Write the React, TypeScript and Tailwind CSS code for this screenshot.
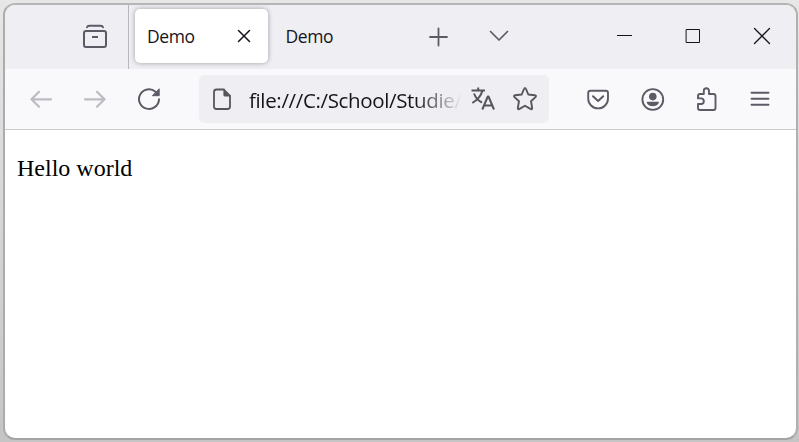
import type { ReactNode } from "react";

function Icon({ children, className = "" }: { children: ReactNode; className?: string }) {
  return (
    <svg
      viewBox="0 0 24 24"
      className={`size-6 shrink-0 overflow-visible ${className}`}
      fill="none"
      stroke="currentColor"
      strokeWidth="2"
      strokeLinecap="round"
      strokeLinejoin="round"
    >
      {children}
    </svg>
  );
}

const tabText =
  "font-['Open_Sans','Noto_Sans',sans-serif] text-[17.5px] leading-6 tracking-[-0.4px] text-[#15141a]";

function TabStrip() {
  return (
    <div className="flex h-16 items-center bg-[#efeef3] pl-[78px] pb-0.5 text-[#5b5b66]">
      <Icon>
        <path d="M4 3.2Q4.5 1.7 6.5 1.7H17.5Q19.5 1.7 20 3.2" />
        <rect x="1" y="7" width="22" height="16" rx="2" />
        <path d="M9 13H15" strokeLinecap="butt" />
      </Icon>
      <div className="-mb-0.5 ml-[21px] h-16 w-px bg-[#b8b8bc]" />
      <div className="ml-1.5 flex h-[54px] w-[133px] items-center justify-between rounded-[5px] bg-white px-3 shadow-[0_0_5px_rgba(0,0,0,0.35)]">
        <span className={tabText}>Demo</span>
        <Icon className="text-[#15141a]">
          <path d="M6.5 6.5L17.5 17.5M17.5 6.5L6.5 17.5" strokeWidth="1.5" />
        </Icon>
      </div>
      <div className="flex w-[158px] pl-[17.5px]">
        <span className={tabText}>Demo</span>
      </div>
      <Icon>
        <path d="M12.5 4.5V21.5M4 13H21" strokeWidth="1.8" />
      </Icon>
      <Icon className="ml-[37px]">
        <path d="M3.5 7.5L12 16L20.5 7.5" strokeWidth="1.7" />
      </Icon>
      <Icon className="ml-[102px] text-[#15141a]">
        <path d="M4 11.5H19" strokeWidth="1" strokeLinecap="butt" />
      </Icon>
      <Icon className="ml-11 text-[#15141a]">
        <path d="M5.5 5.5H18.5V18.5H5.5Z" strokeWidth="1" strokeLinejoin="miter" />
      </Icon>
      <Icon className="ml-[45px] text-[#15141a]">
        <path d="M4.5 4.5L19.5 19.5M19.5 4.5L4.5 19.5" strokeWidth="1.3" />
      </Icon>
    </div>
  );
}

function AddressBar() {
  return (
    <div className="ml-[38px] flex h-12 w-[350px] items-center rounded-[5px] bg-[#efeef3] pl-[11px] text-[#56565a]">
      <Icon>
        <path d="M14 2.5H6.5Q4 2.5 4 5V19.5Q4 22 6.5 22H17.5Q20 22 20 19.5V9" strokeWidth="1.8" />
        <path d="M14 2.5L20 8.5V9H15Q14 9 14 8Z" fill="currentColor" strokeWidth="1.2" />
      </Icon>
      <div className="ml-[15px] mt-[2px] w-[213px] overflow-hidden whitespace-nowrap bg-linear-to-r from-[#15141a] from-78% to-transparent bg-clip-text font-['Open_Sans','Noto_Sans',sans-serif] text-[20.5px] leading-8 tracking-[-0.35px] text-transparent">
        file:///C:/School/Studie/
      </div>
      <Icon className="ml-[9px]">
        <path d="M0.5 3.5H14M7.2 0.5V3.5M3 6.5Q5.5 13 11 15.5M11.5 3.5Q9.5 11 1.3 16" strokeLinecap="butt" />
        <path d="M11.3 22.5L16.8 9.5H17.5L23 22.5M13.3 18.5H21" strokeLinecap="butt" />
      </Icon>
      <Icon className="ml-[18px]">
        <path
          d="M12 1.2Q12.7 1.2 13 2L15.3 7.5L21.8 8.3Q23.8 8.6 22.5 10.1L18 14.2L19.1 20.7Q19.3 22.9 17.4 21.9L12 18.8L6.6 21.9Q4.7 22.9 4.9 20.7L6 14.2L1.5 10.1Q0.2 8.6 2.2 8.3L8.7 7.5L11 2Q11.3 1.2 12 1.2Z"
          strokeWidth="1.9"
        />
      </Icon>
    </div>
  );
}

function Toolbar() {
  return (
    <div className="flex h-[61px] items-center border-b border-[#ccccce] bg-[#f9f9fb] pl-6 text-[#5b5b66]">
      <Icon className="text-[#bcbcc2]">
        <path d="M22 12.3H2.5M10 4.8L2.5 12.3L10 19.8" strokeWidth="2.2" />
      </Icon>
      <Icon className="ml-[30px] text-[#bcbcc2]">
        <path d="M2 12.3H21.5M14 4.8L21.5 12.3L14 19.8" strokeWidth="2.2" />
      </Icon>
      <Icon className="ml-[30px]">
        <path d="M22 12.3A10 9.8 0 1 1 18.5 4.7" />
        <path d="M22.2 2.2V8.7H15.7Z" fill="currentColor" strokeWidth="1" />
      </Icon>
      <AddressBar />
      <Icon className="ml-[37px]">
        <path d="M4.5 3.7H19.8Q22 3.7 22 5.9V11.5A9.9 9.9 0 0 1 2.2 11.5V5.9Q2.2 3.7 4.5 3.7Z" strokeWidth="1.9" />
        <path d="M7 9.3L12.1 14L17.2 9.3" />
      </Icon>
      <Icon className="ml-[31px]">
        <circle cx="11.8" cy="12.5" r="10.4" strokeWidth="1.9" />
        <circle cx="11.8" cy="9.6" r="3.8" fill="currentColor" stroke="none" />
        <path d="M6.6 14.8H17Q18.4 14.8 17.8 16Q15.8 19.3 11.8 19.3Q7.8 19.3 5.8 16Q5.2 14.8 6.6 14.8Z" fill="currentColor" stroke="none" />
      </Icon>
      <Icon className="ml-[30px]">
        <path
          d="M3 17V21Q3 23 5 23H18.5Q20.5 23 20.5 21V9Q20.5 7 18.5 7H14V3.8A2.6 2.6 0 0 0 8.8 3.8V7H5Q3 7 3 9V11.4H6A2.8 2.8 0 0 1 6 17H3Z"
          strokeWidth="1.9"
        />
      </Icon>
      <Icon className="ml-[29px]">
        <path d="M3.5 5.7H20.5M3.5 11.7H20.5M3.5 17.7H20.5" strokeWidth="1.9" />
      </Icon>
    </div>
  );
}

export default function App() {
  return (
    <div className="flex h-[442px] w-[799px] bg-linear-to-b from-[#e7e7e7] to-[#c5c5c5] pt-[3px] pr-px pb-[2px] pl-[3px]">
      <div className="flex flex-1 flex-col overflow-hidden rounded-[12px] border-2 border-t-[#b5b5b5] border-r-[#b0b0b0] border-b-[#a3a5a4] border-l-[#acacac] bg-white">
        <TabStrip />
        <Toolbar />
        <main className="pt-[24px] pl-3 font-['Liberation_Serif',serif] text-[24px] leading-7 text-black">
          Hello world
        </main>
      </div>
    </div>
  );
}
